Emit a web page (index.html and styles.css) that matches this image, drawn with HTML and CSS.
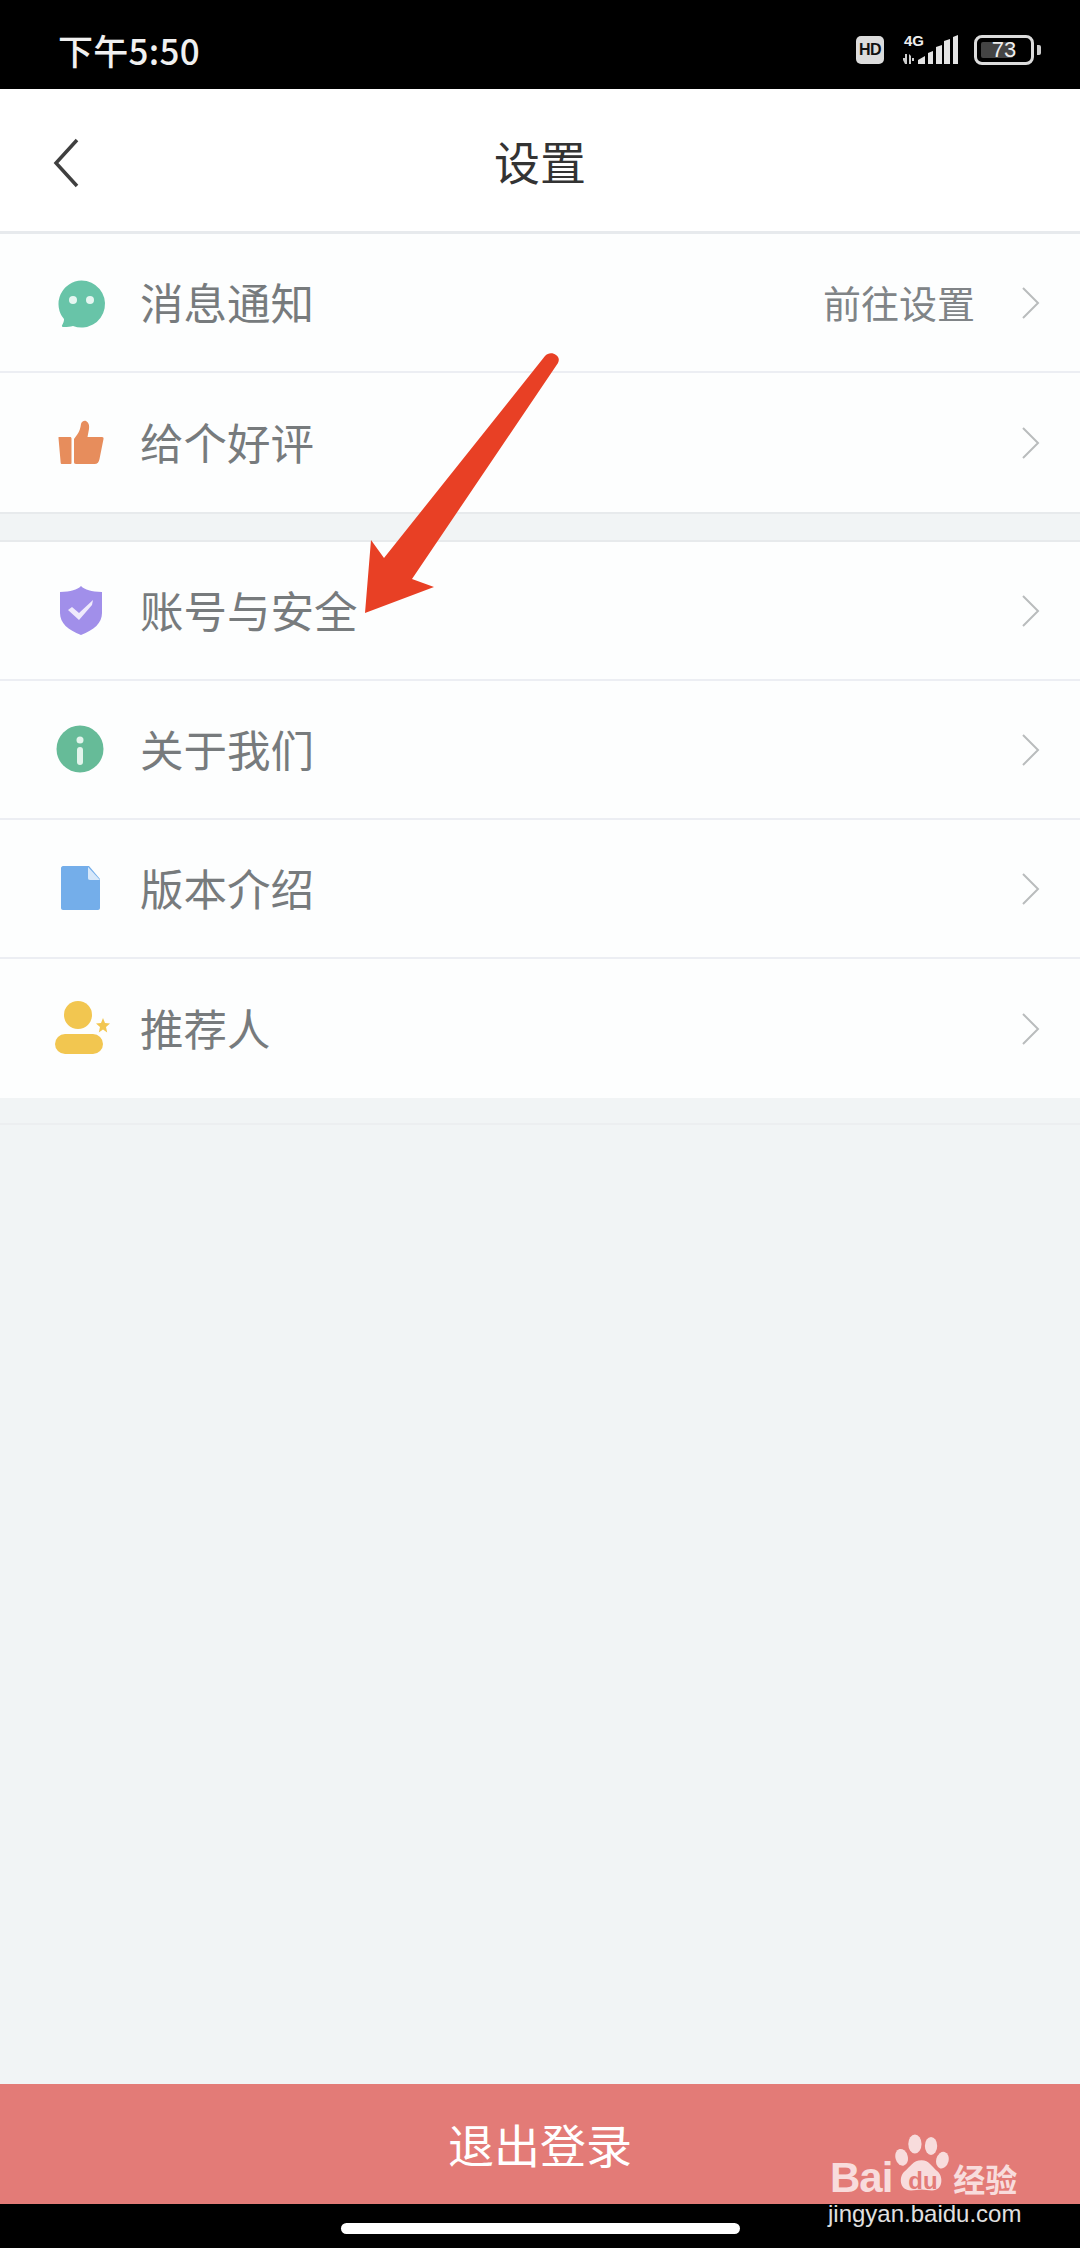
FILE: index.html
```html
<!DOCTYPE html>
<html lang="zh-CN">
<head>
<meta charset="utf-8">
<title>设置</title>
<link rel="stylesheet" href="styles.css">
</head>
<body>
<div class="page">
  <header class="status">
    <span class="time">下午5:50</span>
    <div class="status-icons">
      <span class="hd">HD</span>
      <div class="net">
        <span class="net-label">4G</span>
        <svg class="signal" width="58" height="30" viewBox="0 0 58 30"><g fill="#e4e4e4"><path d="M4 19v4H2v2l2 4h2V19zM8 19l2 2v8H8zM11 23h2v3h-2z" opacity=".9"/><path d="M17 29v-4l7-4v8zM27 29V18l5-2v13zM35 29V12l6-2v19zM43 29V6l6-2v25zM52 29V2l5-2v29z"/></g></svg>
      </div>
      <div class="battery"><span class="battery-fill"></span><span class="battery-num">73</span></div>
      <span class="battery-nub"></span>
    </div>
  </header>

  <nav class="nav">
    <svg class="back" width="26" height="50" viewBox="0 0 26 50"><path d="M24 2 3 25l21 23" fill="none" stroke="#3f3f3f" stroke-width="3.500"/></svg>
    <h1 class="title">设置</h1>
  </nav>

  <section class="group">
    <div class="row">
      <svg class="icon" width="50" height="50" viewBox="0 0 50 50"><path d="M24.500 2.500a23.500 23.500 0 1 1-8.500 45.400c-3 .6-6.500 1.200-10 1-1.200-.1-1.400-1.100-.8-2 1.200-1.800 1.900-3.700 1.800-5.800A23.500 23.500 0 0 1 24.500 2.500z" fill="#68c4a8"/><circle cx="16" cy="22" r="4" fill="#e6f6f1"/><circle cx="33" cy="22" r="4" fill="#e6f6f1"/></svg>
      <span class="label">消息通知</span>
      <span class="hint">前往设置</span>
      <svg class="chev" width="18" height="32" viewBox="0 0 18 32"><path d="M1 1l15 15L1 31" fill="none" stroke="#b9bcbd" stroke-width="2"/></svg>
    </div>
    <div class="row">
      <svg class="icon" width="50" height="50" viewBox="0 0 50 50"><path d="M2 19h11c1 0 1.500.7 1.500 1.500L14.500 45c0 .6-.5 1-1 1H5c-.8 0-1.200-.4-1.300-1L1.500 20c0-.6 0-1 .5-1zM17 21c3-4 6-7 7-15 .3-2 3-4 5-3 3 1.500 3.500 5 3 8l-1.500 8H45c1.200 0 1.800.8 1.500 2l-4 20c-.5 3-2 5-5 5H19c-1.500 0-2-1-2-2z" fill="#e78d5c"/></svg>
      <span class="label">给个好评</span>
      <svg class="chev" width="18" height="32" viewBox="0 0 18 32"><path d="M1 1l15 15L1 31" fill="none" stroke="#b9bcbd" stroke-width="2"/></svg>
    </div>
  </section>

  <div class="gap"></div>

  <section class="group">
    <div class="row">
      <svg class="icon" width="50" height="50" viewBox="0 0 50 50"><path d="M24 0c4 4 10 5.500 21 6V27c0 10-8 17-21 22C11 44 3 37 3 27V6C14 5.500 20 4 24 0z" fill="#a18fea"/><path d="M11 24l4-3 7 6 14-13-1 5-13 15z" fill="#efeafc"/></svg>
      <span class="label">账号与安全</span>
      <svg class="chev" width="18" height="32" viewBox="0 0 18 32"><path d="M1 1l15 15L1 31" fill="none" stroke="#b9bcbd" stroke-width="2"/></svg>
    </div>
    <div class="row">
      <svg class="icon" width="50" height="50" viewBox="0 0 50 50"><circle cx="23" cy="24" r="23.500" fill="#66bb98"/><circle cx="23" cy="15" r="3.500" fill="#e3f4ec"/><rect x="20" y="22" width="6" height="18" rx="3" fill="#e3f4ec"/></svg>
      <span class="label">关于我们</span>
      <svg class="chev" width="18" height="32" viewBox="0 0 18 32"><path d="M1 1l15 15L1 31" fill="none" stroke="#b9bcbd" stroke-width="2"/></svg>
    </div>
    <div class="row">
      <svg class="icon" width="50" height="50" viewBox="0 0 50 50"><path d="M6 2h26l11 13v29c0 1-1 2-2 2H6c-1 0-2-1-2-2V4c0-1 1-2 2-2z" fill="#74aeea"/><path d="M31 3l12 13H33c-1.500 0-2-.7-2-2z" fill="#d7e8fa"/></svg>
      <span class="label">版本介绍</span>
      <svg class="chev" width="18" height="32" viewBox="0 0 18 32"><path d="M1 1l15 15L1 31" fill="none" stroke="#b9bcbd" stroke-width="2"/></svg>
    </div>
    <div class="row">
      <svg class="icon" width="50" height="50" viewBox="0 0 50 50"><circle cx="21" cy="11" r="14" fill="#f2c650"/><rect x="-2" y="30" width="48" height="20" rx="10" fill="#f2c650"/><path d="M46 14l2 5 5 .5-4 3.500 1.200 5.500-4.200-3-4.200 3 1.200-5.500-4-3.500 5-.5z" fill="#f2c650"/></svg>
      <span class="label">推荐人</span>
      <svg class="chev" width="18" height="32" viewBox="0 0 18 32"><path d="M1 1l15 15L1 31" fill="none" stroke="#b9bcbd" stroke-width="2"/></svg>
    </div>
  </section>

  <div class="fill"></div>

  <button class="logout" type="button">退出登录</button>
  <footer class="home"><span class="home-bar"></span></footer>

  <svg class="arrow" width="1080" height="700" viewBox="0 0 1080 700"><path d="M365 613l6-73 13 18L545 356c3-3.500 8-3.500 11-1 3 2 3.500 5 2 8L412 579l22 8z" fill="#e84025"/></svg>

  <div class="mark">
    <div class="mark-row">
      <span class="mark-bai">Bai</span>
      <span class="mark-paw">
        <svg width="55" height="60" viewBox="0 0 58 62"><g fill="#f8dcdc"><ellipse cx="21" cy="11" rx="7" ry="10"/><ellipse cx="38" cy="13" rx="6.500" ry="9.500"/><ellipse cx="7" cy="25" rx="6.500" ry="9" transform="rotate(-15 7 25)"/><ellipse cx="50" cy="28" rx="6.500" ry="9" transform="rotate(15 50 28)"/><path d="M28 28c8 0 11 7 17 12 6 5 6 20-6 20-4 0-7-1-11-1s-7 1-11 1c-13 0-13-15-7-20 6-5 9-12 18-12z"/></g></svg>
        <span class="mark-du">du</span>
      </span>
      <span class="mark-cn">经验</span>
    </div>
    <span class="mark-url">jingyan.baidu.com</span>
  </div>
</div>
</body>
</html>
```
FILE: styles.css
```css
* { box-sizing: border-box; }
html, body { margin: 0; padding: 0; }
body { background: #f1f4f5; font-family: "Noto Sans CJK SC", "Noto Sans", sans-serif; }
.page { position: relative; display: flex; flex-direction: column; width: 1080px; height: 2248px; overflow: hidden; background: #f1f4f5; }

.status { display: flex; align-items: center; justify-content: space-between; flex: none; height: 89px; padding: 4px 39px 0 58px; background: #000; color: #f0f0f0; }
.time { margin-top: 6px; font-size: 35px; font-weight: 500; line-height: 40px; letter-spacing: .3px; }
.status-icons { display: flex; align-items: center; margin-top: 6px; }
.hd { display: flex; align-items: center; justify-content: center; width: 28px; height: 28px; border-radius: 5px; background: #dcdcdc; color: #111; font: 700 16px/1 "Liberation Sans", sans-serif; letter-spacing: -.5px; }
.net { position: relative; width: 58px; height: 30px; margin-left: 17px; }
.net-label { position: absolute; left: 3px; top: -1px; font: 700 15px/14px "Liberation Sans", sans-serif; color: #eee; }
.signal { display: block; }
.battery { position: relative; display: flex; align-items: center; justify-content: center; width: 60px; height: 30px; margin-left: 15px; border: 3px solid #dcdcdc; border-radius: 8px; }
.battery-fill { position: absolute; left: 4px; top: 4px; bottom: 4px; width: 32px; border-radius: 2px; background: #444; }
.battery-num { position: relative; font: 400 22px/1 "Liberation Sans", sans-serif; color: #eee; }
.battery-nub { width: 4px; height: 10px; margin-left: 3px; border-radius: 0 2px 2px 0; background: #ccc; }

.nav { position: relative; display: flex; align-items: center; justify-content: center; flex: none; height: 145px; background: #fff; border-bottom: 3px solid #e7eaed; }
.back { position: absolute; left: 53px; top: 49px; }
.title { margin: 0; font-size: 46px; font-weight: 400; line-height: 60px; color: #333; }

.group { display: flex; flex-direction: column; flex: none; background: #fdfefe; }
.row { display: flex; align-items: center; height: 139px; padding: 0 40px 0 57px; border-bottom: 2px solid #eceef3; }
.row:last-child { border-bottom: 0; }
.icon { flex: none; overflow: visible; }
.label { flex: 1; margin-left: 33px; padding-bottom: 1px; font-size: 43.500px; line-height: 60px; color: #777b7d; }
.hint { margin-right: 47px; padding-bottom: 1px; font-size: 38px; line-height: 50px; color: #808487; }
.chev { flex: none; }

.gap { flex: none; height: 30px; background: #f1f4f5; border-top: 2px solid #e7eaec; border-bottom: 2px solid #e7eaec; }
.fill { flex: 1; background: #f1f4f5 linear-gradient(#eceef0, #eceef0) no-repeat 0 25px / 100% 2px; }

.logout { display: block; flex: none; width: 100%; height: 120px; padding: 0 0 2px; border: 0; background: #e37b77; color: #fff; font: 400 46px/60px "Noto Sans CJK SC", sans-serif; }
.home { display: flex; justify-content: center; flex: none; height: 44px; padding-top: 19px; background: #000; }
.home-bar { width: 399px; height: 11px; border-radius: 6px; background: #fff; }

.arrow { position: absolute; left: 0; top: 0; pointer-events: none; }

.mark { position: absolute; left: 830px; top: 2133px; display: flex; flex-direction: column; align-items: flex-start; width: 200px; }
.mark-row { display: flex; align-items: flex-end; height: 66px; }
.mark-bai { font: 700 42px/42px "Liberation Sans", sans-serif; letter-spacing: -1px; color: #f8dcdc; }
.mark-paw { position: relative; display: block; align-self: flex-start; width: 55px; height: 60px; margin-left: 3px; }
.mark-paw svg { display: block; }
.mark-du { position: absolute; left: 13px; top: 36px; font: 700 24px/24px "Liberation Sans", sans-serif; color: #e37b77; }
.mark-cn { margin-left: 3px; font: 700 32px/42px "Noto Sans CJK SC", sans-serif; color: #f8dcdc; }
.mark-url { margin: 3px 0 0 -2px; font: 400 24px/24px "Liberation Sans", sans-serif; color: #e0e0e0; white-space: nowrap; }
```
